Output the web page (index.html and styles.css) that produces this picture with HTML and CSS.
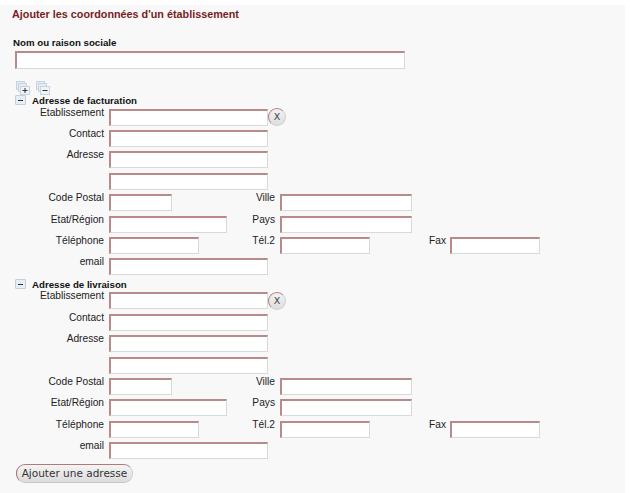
FILE: index.html
```html
<!DOCTYPE html>
<html lang="fr">
<head>
<meta charset="utf-8">
<title>Ajouter les coordonnées d'un établissement</title>
<link rel="stylesheet" href="styles.css">
</head>
<body>
<div class="panel">
  <h1 class="title">Ajouter les coordonnées d'un établissement</h1>
  <div class="name-label">Nom ou raison sociale</div>
  <input class="field name" type="text">
  <div class="tools">
    <span class="tool" title="Tout déplier">
      <svg width="14" height="14" viewBox="0 0 14 14"><rect x="0.5" y="0.5" width="8" height="8" fill="#e3ebf3" stroke="#c8d5e1"/><rect x="2.5" y="2.5" width="8" height="8" fill="#e3ebf3" stroke="#c8d5e1"/><rect x="4.5" y="5.5" width="9" height="8" fill="#eef3f8" stroke="#c8d5e1"/><path d="M6.5 9.5h5M9 7v5" stroke="#333" stroke-width="1"/></svg>
    </span>
    <span class="tool" title="Tout replier">
      <svg width="14" height="14" viewBox="0 0 14 14"><rect x="0.5" y="0.5" width="8" height="8" fill="#e3ebf3" stroke="#c8d5e1"/><rect x="2.5" y="2.5" width="8" height="8" fill="#e3ebf3" stroke="#c8d5e1"/><rect x="4.5" y="5.5" width="9" height="8" fill="#eef3f8" stroke="#c8d5e1"/><path d="M6.5 9.5h5" stroke="#333" stroke-width="1"/></svg>
    </span>
  </div>

  <section class="addr">
    <div class="addr-head"><span class="toggle"></span>Adresse de facturation</div>
    <div class="row"><label class="lbl">Etablissement</label><input class="field w159" type="text"><button class="del" type="button">X</button></div>
    <div class="row"><label class="lbl">Contact</label><input class="field w159" type="text"></div>
    <div class="row"><label class="lbl">Adresse</label><input class="field w159" type="text"></div>
    <div class="row"><label class="lbl"></label><input class="field w159" type="text"></div>
    <div class="row"><label class="lbl">Code Postal</label><span class="c2"><input class="field w63" type="text"></span><label class="lbl2">Ville</label><input class="field w132" type="text"></div>
    <div class="row"><label class="lbl">Etat/Région</label><span class="c2"><input class="field w118" type="text"></span><label class="lbl2">Pays</label><input class="field w132" type="text"></div>
    <div class="row"><label class="lbl">Téléphone</label><span class="c2"><input class="field w90" type="text"></span><label class="lbl2">Tél.2</label><span class="c4"><input class="field w90" type="text"></span><label class="lbl3">Fax</label><input class="field w90" type="text"></div>
    <div class="row"><label class="lbl">email</label><input class="field w159" type="text"></div>
  </section>

  <section class="addr">
    <div class="addr-head"><span class="toggle"></span>Adresse de livraison</div>
    <div class="row"><label class="lbl">Etablissement</label><input class="field w159" type="text"><button class="del" type="button">X</button></div>
    <div class="row"><label class="lbl">Contact</label><input class="field w159" type="text"></div>
    <div class="row"><label class="lbl">Adresse</label><input class="field w159" type="text"></div>
    <div class="row"><label class="lbl"></label><input class="field w159" type="text"></div>
    <div class="row"><label class="lbl">Code Postal</label><span class="c2"><input class="field w63" type="text"></span><label class="lbl2">Ville</label><input class="field w132" type="text"></div>
    <div class="row"><label class="lbl">Etat/Région</label><span class="c2"><input class="field w118" type="text"></span><label class="lbl2">Pays</label><input class="field w132" type="text"></div>
    <div class="row"><label class="lbl">Téléphone</label><span class="c2"><input class="field w90" type="text"></span><label class="lbl2">Tél.2</label><span class="c4"><input class="field w90" type="text"></span><label class="lbl3">Fax</label><input class="field w90" type="text"></div>
    <div class="row"><label class="lbl">email</label><input class="field w159" type="text"></div>
  </section>

  <button class="add" type="button">Ajouter une adresse</button>
</div>
</body>
</html>
```

FILE: styles.css
```css
html, body {
  margin: 0;
  padding: 0;
  background: #ffffff;
  overflow: hidden;
}

body {
  font-family: "Liberation Sans", Arial, sans-serif;
  color: #222;
}

.panel {
  margin: 5px 5px 0 0;
  padding: 2.5px 0 0 12px;
  min-height: 488px;
  box-sizing: border-box;
  background: #f8f8f8;
}

.title {
  margin: 0;
  font-size: 10.8px;
  line-height: 13px;
  font-weight: bold;
  color: #7a1c1c;
}

.name-label {
  margin: 16.6px 0 0 1px;
  font-size: 9.7px;
  line-height: 12px;
  font-weight: bold;
  color: #111;
}

.field {
  display: block;
  box-sizing: border-box;
  height: 17px;
  margin: 2px 0 0 0;
  padding: 0 2px;
  background: #fff;
  border-style: solid;
  border-width: 2px 1px 1px 2px;
  border-color: #b98a8a #d9d9d9 #d9d9d9 #b98a8a;
  font: 10px "Liberation Sans", Arial, sans-serif;
  outline: none;
}

.field.name {
  width: 390px;
  height: 18px;
  margin: 1.9px 0 0 3px;
}

.w159 { width: 159px; }
.w132 { width: 132px; }
.w118 { width: 118px; }
.w90 { width: 90px; }
.w63 { width: 63px; }

.tools {
  display: flex;
  gap: 6px;
  height: 13px;
  margin: 12px 0 0 3.7px;
}

.tool {
  display: block;
  width: 14px;
  height: 14px;
}

.tool svg { display: block; }

.addr-head {
  display: flex;
  align-items: center;
  height: 12.7px;
  font-size: 9.7px;
  font-weight: bold;
  color: #111;
}

.toggle {
  position: relative;
  box-sizing: border-box;
  width: 11px;
  height: 10px;
  margin: 0 6px 0 3px;
  background: #e6eef6;
  border: 1px solid #c2d0dd;
  border-radius: 1px;
}

.toggle::after {
  content: "";
  position: absolute;
  left: 2px;
  right: 2px;
  top: 3.5px;
  height: 1px;
  background: #333;
}

.row {
  display: flex;
  align-items: flex-start;
  height: 21.4px;
}

.lbl, .lbl2, .lbl3 {
  display: block;
  flex: none;
  font-size: 10.2px;
  line-height: 12px;
  text-align: right;
  color: #222;
  white-space: nowrap;
}

.lbl {
  width: 92px;
  margin-right: 5px;
}

.lbl2 {
  width: 35px;
  margin-right: 5px;
}

.lbl3 {
  width: 26px;
  margin-right: 4px;
}

.c2 {
  display: block;
  flex: none;
  width: 131px;
}

.c4 {
  display: block;
  flex: none;
  width: 140px;
}

.del {
  flex: none;
  box-sizing: border-box;
  width: 18px;
  height: 18px;
  margin: 1.3px 0 0 0;
  padding: 0;
  border-radius: 50%;
  border-style: solid;
  border-width: 1px;
  border-color: #b07a7a #cfcfcf #cfcfcf #b07a7a;
  background: linear-gradient(#f2f2f2, #dedede);
  font: 9.5px "DejaVu Sans", sans-serif;
  line-height: 16px;
  color: #444;
  text-align: center;
}

.add {
  display: block;
  box-sizing: border-box;
  height: 19px;
  margin: 2.2px 0 0 3.7px;
  padding: 0 5px;
  border-radius: 9px;
  border-style: solid;
  border-width: 1px;
  border-color: #b07a7a #cfcfcf #c8c8c8 #a86e6e;
  background: linear-gradient(#f4f4f4, #dcdcdc);
  font: 10.5px "DejaVu Sans", sans-serif;
  line-height: 17px;
  color: #333;
  white-space: nowrap;
}
```
